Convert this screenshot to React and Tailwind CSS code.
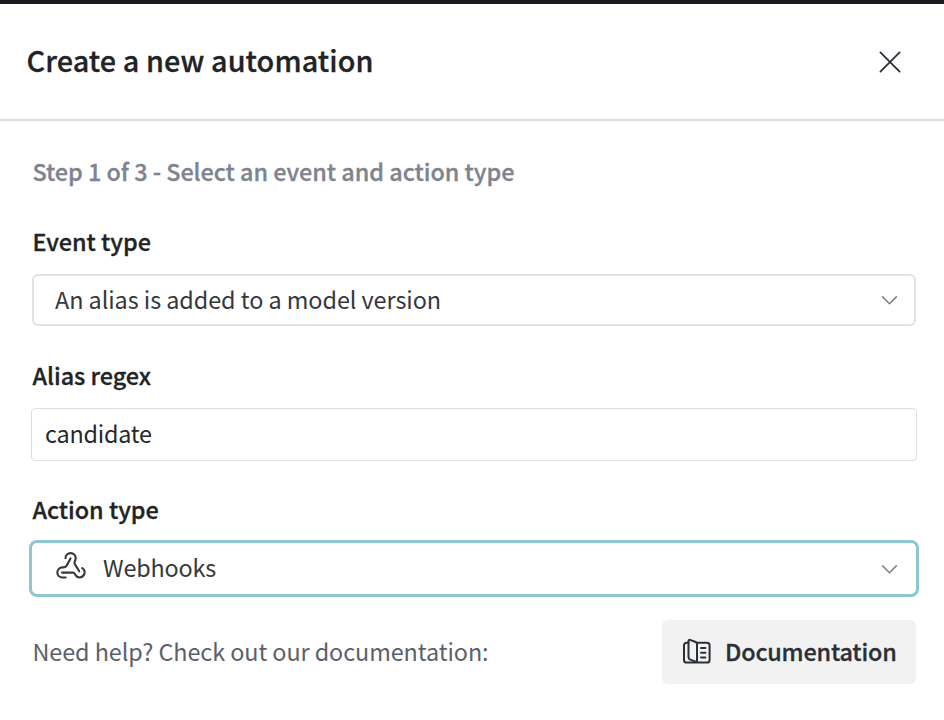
function CloseIcon() {
  return (
    <svg className="h-6 w-6" viewBox="0 0 24 24" fill="none" stroke="#2b3038" strokeWidth="1.8" strokeLinecap="round">
      <path d="M2.4 2.4 21.6 21.6M21.6 2.4 2.4 21.6" />
    </svg>
  );
}

function ChevronIcon() {
  return (
    <svg className="h-4 w-4" viewBox="0 0 16 16" fill="none" stroke="#79808a" strokeWidth="1.5" strokeLinecap="round" strokeLinejoin="round">
      <path d="M1.7 4.9 8.5 11.7 15.3 4.9" />
    </svg>
  );
}

function WebhookIcon() {
  return (
    <svg className="mb-1.5 h-7 w-8" viewBox="0 0 32 28" fill="none" stroke="#36383b" strokeWidth="2.1" strokeLinecap="round" strokeLinejoin="round">
      <path d="M10.500 6.200A5.100 5.100 0 0 1 20.700 6.200C20.700 8.300 19.400 9.200 19.500 10.900C19.500 11.500 19.800 12 20.200 12.600L24.200 19.300" />
      <path d="M15.500 6.400 12 13C11.100 14.700 10 15.400 8.200 15.400H7.400A5.050 5.050 0 0 0 7.400 25.500H10.600" />
      <path d="M7 20.600H18C19.300 20.600 19.700 21.400 20.200 22.500C21.200 24.500 23 25.600 25 25.500A5.100 5.100 0 0 0 27.200 16.100" />
    </svg>
  );
}

function DocsIcon() {
  return (
    <svg className="h-7 w-[30px]" viewBox="0 0 30 28" fill="none" stroke="#2b3038" strokeWidth="2" strokeLinecap="round" strokeLinejoin="round">
      <path d="M6.500 4.700H4.600A2.600 2.600 0 0 0 2 7.300V21.900A2.600 2.600 0 0 0 4.600 24.500H25A2.600 2.600 0 0 0 27.600 21.900V7.300A2.600 2.600 0 0 0 25 4.700H15" />
      <path d="M6.500 2.900C6.500 2.100 7.200 1.600 8 1.900L13.600 4C14.400 4.300 15 5 15 5.900V24.100L8.200 21.600C7.200 21.200 6.500 20.400 6.500 19.300Z" />
      <path d="M19 9.900H23.400M19 14.700H23.400M19 19.500H23.400" />
    </svg>
  );
}

function FieldLabel({ children }) {
  return <div className="h-8 pl-[0.5px] text-[23.4px] leading-8 font-medium tracking-[-0.03px] text-[#222325] [-webkit-text-stroke:0.3px_#222325]">{children}</div>;
}

export default function App() {
  return (
    <div className="h-[720px] w-[944px] overflow-hidden bg-white whitespace-nowrap font-['Noto_Sans_CJK_SC',sans-serif]">
      <div className="h-1 bg-[#1b1a20]" />
      <header className="flex h-[117px] items-center justify-between border-b-2 border-[#dadfe4] pr-[42px] pl-[26px]">
        <h1 className="pb-1 pl-[0.5px] text-[28.8px] leading-10 font-medium tracking-[0.09px] text-[#222325] [-webkit-text-stroke:0.3px_#222325]">Create a new automation</h1>
        <button className="flex"><CloseIcon /></button>
      </header>
      <main className="flex flex-col pt-[34px] pr-7 pl-8">
        <h2 className="h-8 pl-[0.5px] text-[23.4px] leading-8 font-medium tracking-[-0.03px] text-[#7d848f] [-webkit-text-stroke:0.3px_#7d848f]">Step 1 of 3 - Select an event and action type</h2>
        <div className="mt-[38px]"><FieldLabel>Event type</FieldLabel></div>
        <div className="mt-[17px] flex h-[52px] items-center justify-between rounded-md border-2 border-[#e0e2e7] pr-[17px] pl-[21px]">
          <span className="pb-0.5 text-[23.4px] leading-8 tracking-[-0.06px] text-[#36383b]">An alias is added to a model version</span>
          <ChevronIcon />
        </div>
        <div className="mt-[33px]"><FieldLabel>Alias regex</FieldLabel></div>
        <div className="-mx-px mt-[17px] flex h-[53px] items-center rounded border border-[#dbdde2] pl-[13px]">
          <span className="pb-1 text-[23.4px] leading-8 tracking-[-0.22px] text-[#26282b]">candidate</span>
        </div>
        <div className="mt-8"><FieldLabel>Action type</FieldLabel></div>
        <div className="-mx-[3px] mt-[15px] flex h-[57px] items-center justify-between rounded-lg border-[3px] border-[#8dc7d2] pr-[19px] pl-[23px]">
          <div className="flex items-center">
            <WebhookIcon />
            <span className="ml-4 pb-1 text-[23.4px] leading-8 tracking-[-0.15px] text-[#36383b]">Webhooks</span>
          </div>
          <ChevronIcon />
        </div>
        <div className="mt-[23px] flex h-16 items-center justify-between">
          <span className="pb-0.5 pl-[0.5px] text-[23.4px] leading-8 tracking-[-0.08px] text-[#5b616b]">Need help? Check out our documentation:</span>
          <button className="flex h-16 w-[254px] items-center rounded-md bg-[#f2f2f2] pl-5">
            <DocsIcon />
            <span className="ml-[13px] pb-0.5 text-[23.4px] leading-8 font-medium tracking-[-0.18px] text-[#2b3038] [-webkit-text-stroke:0.3px_#2b3038]">Documentation</span>
          </button>
        </div>
      </main>
    </div>
  );
}
